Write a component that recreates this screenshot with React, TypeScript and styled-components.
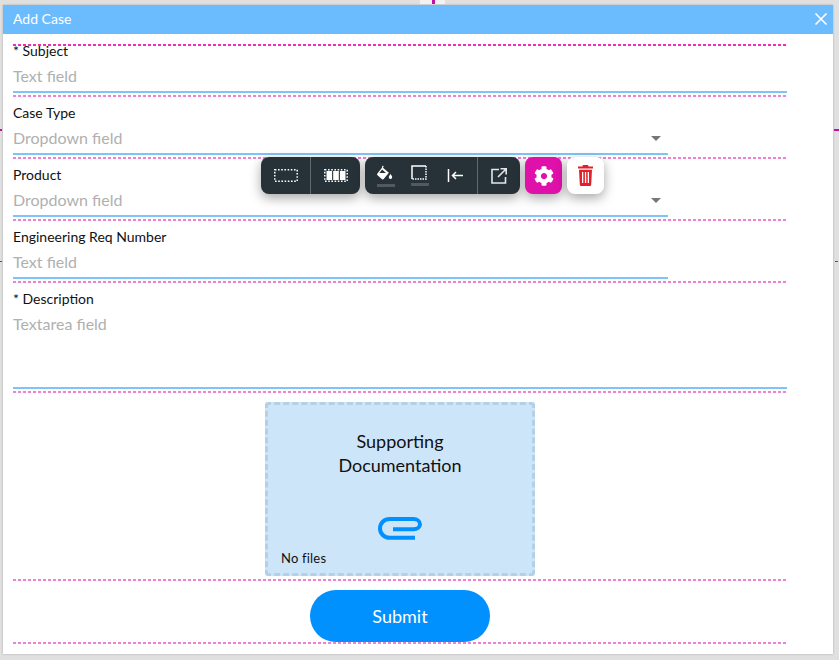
import React from 'react';
import styled, { createGlobalStyle } from 'styled-components';
import { FaCog } from 'react-icons/fa';

const GlobalStyle = createGlobalStyle`
  html, body {
    margin: 0;
    padding: 0;
    background: #e0e0e0;
    font-family: 'Lato', 'Liberation Sans', sans-serif;
  }
`;

const Page = styled.div`
  position: relative;
  width: 839px;
  height: 660px;
  overflow: hidden;
  padding: 5px 6px 6px 3px;
  box-sizing: border-box;
`;

const Modal = styled.div`
  position: relative;
  height: 649px;
  background: #fff;
  box-shadow: 0 0 2px rgba(0, 0, 0, 0.25);
`;

const Header = styled.div`
  display: flex;
  align-items: center;
  justify-content: space-between;
  height: 29px;
  padding: 0 5px 2px 10px;
  box-sizing: border-box;
  background: #6bbbff;
  color: #fff;
  font-size: 14px;
`;

const Close = styled.button`
  display: flex;
  margin-top: 1px;
  padding: 0;
  border: 0;
  background: none;
  color: #fff;
`;

const Form = styled.div`
  width: 774px;
  margin: 10px 0 0 10px;
`;

const Dots = styled.div<{ $strong?: boolean }>`
  position: relative;
  height: 2px;
  background: repeating-linear-gradient(
    90deg,
    ${(p) => (p.$strong ? '#f02cb8' : '#f27fd6')} 0 3px,
    transparent 3px 5px
  );
`;

const Row = styled.div<{ $short?: boolean; $tall?: boolean; $first?: boolean }>`
  position: relative;
  box-sizing: border-box;
  width: ${(p) => (p.$short ? '655px' : '774px')};
  height: ${(p) => (p.$tall ? '106px' : '58px')};
  padding-top: 7px;
  margin-top: ${(p) => (p.$first ? '-11px' : '0')};
  margin-bottom: 2px;
  border-bottom: 2px solid #80c3f8;
`;

const Label = styled.div`
  font-size: 14px;
  line-height: 17px;
  color: #111;
`;

const Placeholder = styled.div`
  margin-top: 7px;
  font-size: 16px;
  line-height: 20px;
  color: #b0b0b0;
`;

const Caret = styled.span`
  position: absolute;
  right: 7px;
  top: 39px;
  width: 0;
  height: 0;
  border-left: 5px solid transparent;
  border-right: 5px solid transparent;
  border-top: 5px solid #777;
`;

const UploadRow = styled.div`
  display: flex;
  justify-content: center;
  padding: 9px 0 3px;
`;

const DropZone = styled.div`
  display: flex;
  flex-direction: column;
  align-items: center;
  box-sizing: border-box;
  width: 270px;
  height: 174px;
  padding-top: 24px;
  background: #cde5f9;
  border: 3px dashed #b4d0e6;
  border-radius: 3px;
`;

const DropTitle = styled.div`
  width: 170px;
  font-size: 18px;
  line-height: 24px;
  text-align: center;
  color: #111;
`;

const ClipIcon = styled.svg`
  flex: none;
  margin-top: 40px;
`;

const NoFiles = styled.div`
  align-self: flex-start;
  margin: 10px 0 0 13px;
  font-size: 13px;
  line-height: 16px;
  letter-spacing: 0.2px;
  color: #111;
`;

const SubmitRow = styled.div`
  display: flex;
  justify-content: center;
  padding-top: 9px;
`;

const SubmitButton = styled.button`
  width: 180px;
  height: 52px;
  padding: 0;
  border: 0;
  border-radius: 26px;
  background: #0091ff;
  color: #fff;
  font-family: 'Lato', 'Liberation Sans', sans-serif;
  font-size: 18px;
`;

const Toolbar = styled.div`
  position: absolute;
  left: 261px;
  top: 157px;
  display: flex;
  gap: 5px;
`;

const Group = styled.div`
  display: flex;
  height: 37px;
  border-radius: 8px;
  background: #263238;
  box-shadow: 0 4px 12px rgba(0, 0, 0, 0.35);
`;

const Tool = styled.div<{ $width: number; $divided?: boolean; $padLeft?: number; $padRight?: number }>`
  display: flex;
  align-items: center;
  justify-content: center;
  box-sizing: border-box;
  width: ${(p) => p.$width}px;
  padding: 0 ${(p) => p.$padRight ?? 0}px 0 ${(p) => p.$padLeft ?? 0}px;
  border-left: ${(p) => (p.$divided ? '1px solid #5f6a70' : '0')};
`;

const Swatch = styled.div`
  display: flex;
  flex-direction: column;
  align-items: flex-start;
  gap: 3px;
  width: 18px;
  &::after {
    content: '';
    width: 18px;
    height: 3px;
    background: #505a60;
  }
`;

const Square = styled.div<{ $bg: string; $fg: string }>`
  display: flex;
  align-items: center;
  justify-content: center;
  width: 37px;
  height: 37px;
  border-radius: 8px;
  background: ${(p) => p.$bg};
  color: ${(p) => p.$fg};
  box-shadow: 0 4px 12px rgba(0, 0, 0, 0.35);
`;

const Tick = styled.span<{ $x: number; $y: number; $w: number; $h: number; $light?: boolean }>`
  position: absolute;
  left: ${(p) => p.$x}px;
  top: ${(p) => p.$y}px;
  width: ${(p) => p.$w}px;
  height: ${(p) => p.$h}px;
  background: ${(p) => (p.$light ? '#f2f2f2' : '#c4109c')};
`;

const fields = [
  { label: '* Subject', hint: 'Text field', first: true },
  { label: 'Case Type', hint: 'Dropdown field', short: true, caret: true },
  { label: 'Product', hint: 'Dropdown field', short: true, caret: true },
  { label: 'Engineering Req Number', hint: 'Text field', short: true },
  { label: '* Description', hint: 'Textarea field', tall: true },
];

const App = () => (
  <>
    <GlobalStyle />
    <Page>
      <Modal>
        <Header>
          Add Case
          <Close>
            <svg width="14" height="14" viewBox="0 0 14 14" fill="none" stroke="currentColor" strokeWidth="1.6">
              <path d="M1.5 1.5l11 11M12.5 1.5l-11 11" />
            </svg>
          </Close>
        </Header>
        <Form>
          <Dots $strong />
          {fields.map((f) => (
            <React.Fragment key={f.label}>
              <Row $short={f.short} $tall={f.tall} $first={f.first}>
                <Label>{f.label}</Label>
                <Placeholder>{f.hint}</Placeholder>
                {f.caret && <Caret />}
              </Row>
              <Dots />
            </React.Fragment>
          ))}
          <UploadRow>
            <DropZone>
              <DropTitle>Supporting Documentation</DropTitle>
              <ClipIcon width="44" height="23" viewBox="0 0 44 23" fill="none" stroke="#0091ff" strokeWidth="4">
                <path d="M37 20.800H12C6 20.800 2 16.500 2 11.500C2 6 6 2 12 2H35.500C39 2 42 4.200 42 7.300C42 10.300 39 12.200 35.500 12.200H15" />
              </ClipIcon>
              <NoFiles>No files</NoFiles>
            </DropZone>
          </UploadRow>
          <Dots />
          <SubmitRow>
            <SubmitButton>Submit</SubmitButton>
          </SubmitRow>
          <Dots />
        </Form>
      </Modal>
      <Toolbar>
        <Group>
          <Tool $width={49}>
            <svg width="24" height="13" viewBox="0 0 24 13" fill="none" stroke="#fff" strokeWidth="1.500" strokeDasharray="1.600 1.600">
              <rect x="0.800" y="0.800" width="22.400" height="11.400" />
            </svg>
          </Tool>
          <Tool $width={50} $divided>
            <svg width="24" height="13" viewBox="0 0 24 13">
              <rect x="0.800" y="0.800" width="22.400" height="11.400" fill="none" stroke="#fff" strokeWidth="1.500" strokeDasharray="1.600 1.600" />
              <path d="M2.500 2h5.600v9H2.500zM9.200 2h5.600v9H9.200zM15.900 2h5.600v9h-5.600z" fill="#fff" />
            </svg>
          </Tool>
        </Group>
        <Group>
          <Tool $width={37} $padLeft={5}>
            <Swatch>
              <svg width="16" height="16" viewBox="0 0 16 16" fill="#fff">
                <path d="M5.500 0.500l1.300 0.900-.9 1.300 6 5.100-5.200 6.300c-.5.500-1.200.5-1.700.1L.5 10.300c-.5-.5-.5-1.200-.1-1.700l4.400-5.500.7-2.600zM5.200 4.400L2.400 8h6.500L5.200 4.400z" />
                <path d="M13.500 9c1 1.500 1.700 2.400 1.700 3.300a1.700 1.700 0 0 1-3.400 0c0-.9.700-1.800 1.700-3.300z" />
              </svg>
            </Swatch>
          </Tool>
          <Tool $width={35}>
            <Swatch>
              <svg width="16" height="15" viewBox="0 0 16 15" fill="none" stroke="#fff">
                <path d="M1 14V1h14" strokeWidth="1.500" />
                <path d="M15 1v13H1" strokeWidth="1.500" strokeDasharray="1.500 1" />
              </svg>
            </Swatch>
          </Tool>
          <Tool $width={40} $padRight={5}>
            <svg width="16" height="13" viewBox="0 0 16 13" fill="none" stroke="#fff" strokeWidth="1.500">
              <path d="M1.500 0v13M16 6.500H5.500M9 3L5.500 6.500 9 10" />
            </svg>
          </Tool>
          <Tool $width={43} $divided>
            <svg width="16" height="16" viewBox="0 0 16 16" fill="none" stroke="#e4e6e7" strokeWidth="1.600">
              <path d="M8 1.500H1v13.500h13.500V9M9.500 0.800h5.700v5.700M15 1L7 9" />
            </svg>
          </Tool>
        </Group>
        <Square $bg="#e010aa" $fg="#fff">
          <FaCog size={20} />
        </Square>
        <Square $bg="#fff" $fg="#e3202a">
          <svg width="15" height="21" viewBox="0 0 15 21" fill="currentColor">
            <path d="M5 0h5l.6 1.400H15v2.200H0V1.400h4.400L5 0zM1 4.800h13l-.8 14.600c-.1.900-.7 1.600-1.600 1.600H3.400c-.9 0-1.500-.7-1.600-1.600L1 4.800zM4 7v11h1.300V7H4zm2.900 0v11h1.300V7H6.900zm2.800 0v11H11V7H9.700z" fillRule="evenodd" />
          </svg>
        </Square>
      </Toolbar>
      <Tick $light $x={420} $y={0} $w={25} $h={4} />
      <Tick $x={432} $y={0} $w={3} $h={4} />
      <Tick $x={0} $y={129} $w={2} $h={2} />
      <Tick $x={834} $y={129} $w={5} $h={2} />
      <Tick $x={0} $y={261} $w={2} $h={1} />
      <Tick $x={835} $y={261} $w={3} $h={1} />
    </Page>
  </>
);

export default App;
